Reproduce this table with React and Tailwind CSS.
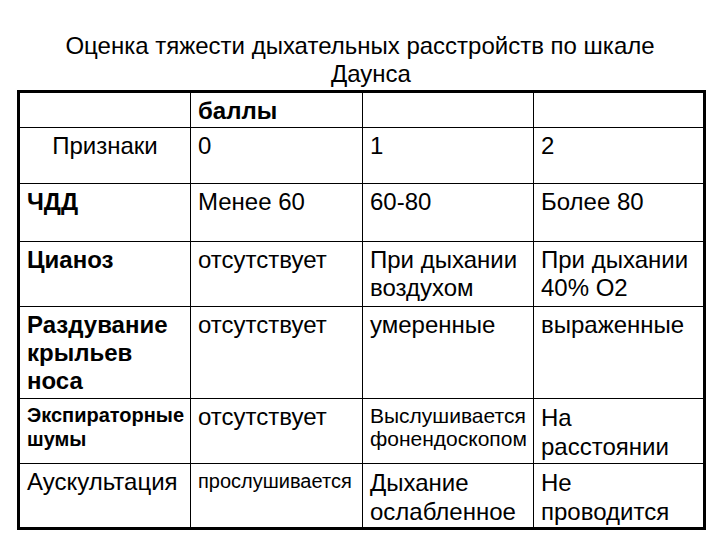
import React from 'react';

const big = 'text-[24px] leading-[28px] pt-[4px] pl-[7px]';
const tall = 'text-[24px] leading-[29px] pt-[4px] pl-[7px]';

const rows = [
  {
    h: 'h-[58px]',
    cells: [
      { t: ['ЧДД'], c: `${big} font-bold` },
      { t: ['Менее 60'], c: big },
      { t: ['60-80'], c: big },
      { t: ['Более 80'], c: big },
    ],
  },
  {
    h: 'h-[65px]',
    cells: [
      { t: ['Цианоз'], c: `${big} font-bold` },
      { t: ['отсутствует'], c: big },
      { t: ['При дыхании', 'воздухом'], c: big },
      { t: ['При дыхании', '40% O2'], c: big },
    ],
  },
  {
    h: 'h-[92px]',
    cells: [
      { t: ['Раздувание', 'крыльев', 'носа'], c: `${big} font-bold` },
      { t: ['отсутствует'], c: big },
      { t: ['умеренные'], c: big },
      { t: ['выраженные'], c: big },
    ],
  },
  {
    h: 'h-[65px]',
    cells: [
      { t: ['Экспираторные', 'шумы'], c: 'font-bold text-[20px] leading-[24px] pt-[4px] pl-[7px]' },
      { t: ['отсутствует'], c: big },
      { t: ['Выслушивается', 'фонендоскопом'], c: 'text-[21px] leading-[23px] pt-[5px] pl-[7px]' },
      { t: ['На', 'расстоянии'], c: tall },
    ],
  },
  {
    h: 'h-[65px]',
    cells: [
      { t: ['Аускультация'], c: big },
      { t: ['прослушивается'], c: 'text-[20px] leading-[24px] pt-[5px] pl-[7px]' },
      { t: ['Дыхание', 'ослабленное'], c: tall },
      { t: ['Не', 'проводится'], c: tall },
    ],
  },
];

function Cell({ lines, className }) {
  return (
    <td className={`border border-black align-top pr-[2px] ${className}`}>
      {lines.map((l, i) => (
        <div key={i} className="whitespace-nowrap">{l}</div>
      ))}
    </td>
  );
}

export default function App() {
  return (
    <div className="w-[720px] h-[540px] bg-white text-black overflow-hidden font-['Liberation_Sans',Arial,sans-serif]">
      <h1 className="pt-[32px] text-center text-[24px] leading-[28px] font-normal">
        Оценка тяжести дыхательных расстройств по шкале
        <br />
        <span className="pl-[22px]">Даунса</span>
      </h1>
      <table className="ml-[17px] mt-[2px] w-[686px] table-fixed border-collapse border-[3px] border-black">
        <colgroup>
          <col className="w-[172px]" />
          <col className="w-[172px]" />
          <col className="w-[171px]" />
          <col className="w-[171px]" />
        </colgroup>
        <tbody>
          <tr className="h-[36px]">
            <Cell lines={['']} className={big} />
            <Cell lines={['баллы']} className={`${big} font-bold`} />
            <Cell lines={['']} className={big} />
            <Cell lines={['']} className={big} />
          </tr>
          <tr className="h-[56px]">
            <Cell lines={['Признаки']} className="text-[24px] leading-[28px] pt-[4px] pl-[2px] text-center" />
            <Cell lines={['0']} className={big} />
            <Cell lines={['1']} className={big} />
            <Cell lines={['2']} className={big} />
          </tr>
          {rows.map((r, i) => (
            <tr key={i} className={r.h}>
              {r.cells.map((c, j) => (
                <Cell key={j} lines={c.t} className={c.c} />
              ))}
            </tr>
          ))}
        </tbody>
      </table>
    </div>
  );
}
